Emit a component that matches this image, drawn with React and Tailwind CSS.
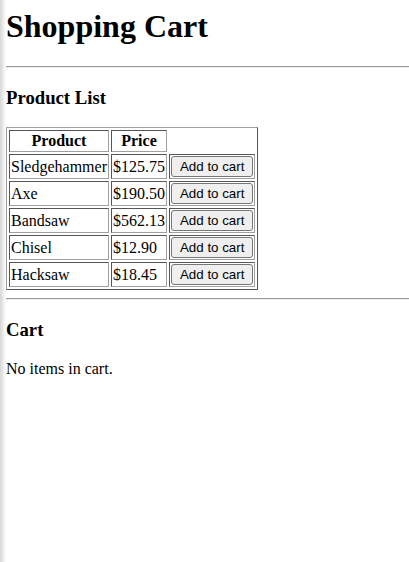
import React, { useState } from 'react';

const products = [
    { name: 'Sledgehammer', price: 125.75 },
    { name: 'Axe', price: 190.5 },
    { name: 'Bandsaw', price: 562.13 },
    { name: 'Chisel', price: 12.9 },
    { name: 'Hacksaw', price: 18.45 },
];

const App = () => {
    const [cart, setCart] = useState([]);

    const addToCart = (product) => {
        setCart((prev) => [...prev, product]);
    };

    return (
        <div className="flex min-h-[562px] bg-white text-black font-['Liberation_Serif',serif] text-[16px] leading-[normal]">
            <div className="w-[6px] shrink-0 bg-gradient-to-r from-[#d6d6d6] to-white"></div>
            <div className="flex-1 pt-[7.5px]">
                <h1 className="text-[32px] font-bold leading-[normal] mb-[21.44px]">Shopping Cart</h1>
                <hr className="border-0 border-t border-t-[#9a9a9a] border-b border-b-[#eeeeee] mb-[8px]" />
                <h3 className="text-[18.72px] font-bold leading-[normal] my-[18.72px]">Product List</h3>
                <table className="border-separate border-spacing-[2px] border border-t-[#a0a0a0] border-l-[#a0a0a0] border-r-[#555] border-b-[#555]">
                    <thead>
                        <tr>
                            <th className="p-px font-bold text-center border border-t-[#555] border-l-[#555] border-r-[#a0a0a0] border-b-[#a0a0a0]">Product</th>
                            <th className="p-px font-bold text-center border border-t-[#555] border-l-[#555] border-r-[#a0a0a0] border-b-[#a0a0a0]">Price</th>
                            <th></th>
                        </tr>
                    </thead>
                    <tbody>
                        {products.map((p) => (
                            <tr key={p.name}>
                                <td className="p-px text-left border border-t-[#555] border-l-[#555] border-r-[#a0a0a0] border-b-[#a0a0a0]">{p.name}</td>
                                <td className="p-px text-left border border-t-[#555] border-l-[#555] border-r-[#a0a0a0] border-b-[#a0a0a0]">${p.price.toFixed(2)}</td>
                                <td className="p-px border border-t-[#555] border-l-[#555] border-r-[#a0a0a0] border-b-[#a0a0a0]">
                                    <button
                                        onClick={() => addToCart(p)}
                                        className="block font-['Liberation_Sans',Arial,sans-serif] text-[13.33px] leading-[normal] px-[8px] py-[2px] bg-[#efefef] border border-[#767676] rounded-[3px] text-black"
                                    >
                                        Add to cart
                                    </button>
                                </td>
                            </tr>
                        ))}
                    </tbody>
                </table>
                <hr className="border-0 border-t border-t-[#9a9a9a] border-b border-b-[#eeeeee] mt-[8px]" />
                <h3 className="text-[18.72px] font-bold leading-[normal] my-[18.72px]">Cart</h3>
                {cart.length === 0 ? (
                    <p className="my-[16px]">No items in cart.</p>
                ) : (
                    <ul className="my-[16px] list-disc pl-[40px]">
                        {cart.map((item, i) => (
                            <li key={i}>{item.name} - ${item.price.toFixed(2)}</li>
                        ))}
                    </ul>
                )}
            </div>
        </div>
    );
};

export default App;
